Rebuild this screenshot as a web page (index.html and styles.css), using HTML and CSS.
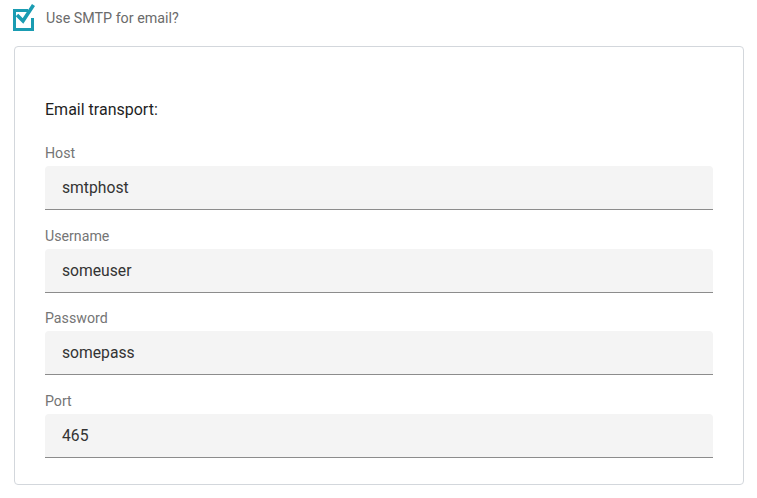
FILE: index.html
```html
<!DOCTYPE html>
<html>
<head>
<meta charset="utf-8">
<link rel="stylesheet" href="styles.css">
</head>
<body>
<div class="page">
  <div class="check-row">
    <svg class="checkbox" width="26" height="32" viewBox="10 0 26 32">
      <path d="M28 10.5 H14.5 V29.5 H32.5 V18" fill="none" stroke="#1a9cb2" stroke-width="3"/>
      <path d="M17 15 L23 21 L33.5 5" fill="none" stroke="#1a9cb2" stroke-width="3.6" stroke-linecap="butt" stroke-linejoin="miter"/>
    </svg>
    <span class="check-label">Use SMTP for email?</span>
  </div>
  <div class="card">
    <h2 class="card-title">Email transport:</h2>
    <div class="fields">
      <div class="field">
        <div class="field-label">Host</div>
        <div class="field-input">smtphost</div>
      </div>
      <div class="field">
        <div class="field-label">Username</div>
        <div class="field-input">someuser</div>
      </div>
      <div class="field">
        <div class="field-label">Password</div>
        <div class="field-input">somepass</div>
      </div>
      <div class="field">
        <div class="field-label">Port</div>
        <div class="field-input">465</div>
      </div>
    </div>
  </div>
</div>
</body>
</html>
```
FILE: styles.css
```css
html, body {
  margin: 0;
  padding: 0;
  background: #ffffff;
}
body {
  font-family: Roboto, "Liberation Sans", Arial, sans-serif;
}
.page {
  width: 757px;
}
.check-row {
  display: flex;
  align-items: center;
  height: 36px;
  padding-left: 10px;
}
.checkbox {
  align-self: flex-start;
  flex: none;
}
.check-label {
  margin-left: 10px;
  font-size: 14.3px;
  line-height: 16px;
  color: #6b6b6b;
}
.card {
  box-sizing: border-box;
  margin: 10px 0 0 14px;
  width: 730px;
  border: 1px solid #d3d7dc;
  border-radius: 4px;
  padding: 53px 30px 26px 30px;
}
.card-title {
  margin: 0 0 25px 0;
  font-size: 16px;
  line-height: 20px;
  font-weight: 400;
  color: #1f1f1f;
}
.fields {
  display: flex;
  flex-direction: column;
  gap: 17.7px;
}
.field-label {
  font-size: 14.2px;
  line-height: 16px;
  color: #757575;
  margin-bottom: 5px;
}
.field-input {
  box-sizing: border-box;
  height: 44px;
  background: #f4f4f4;
  border-bottom: 1px solid #8c8c8c;
  border-radius: 4px 4px 0 0;
  padding-left: 17px;
  font-size: 15.7px;
  line-height: 43px;
  color: #333333;
}
```
